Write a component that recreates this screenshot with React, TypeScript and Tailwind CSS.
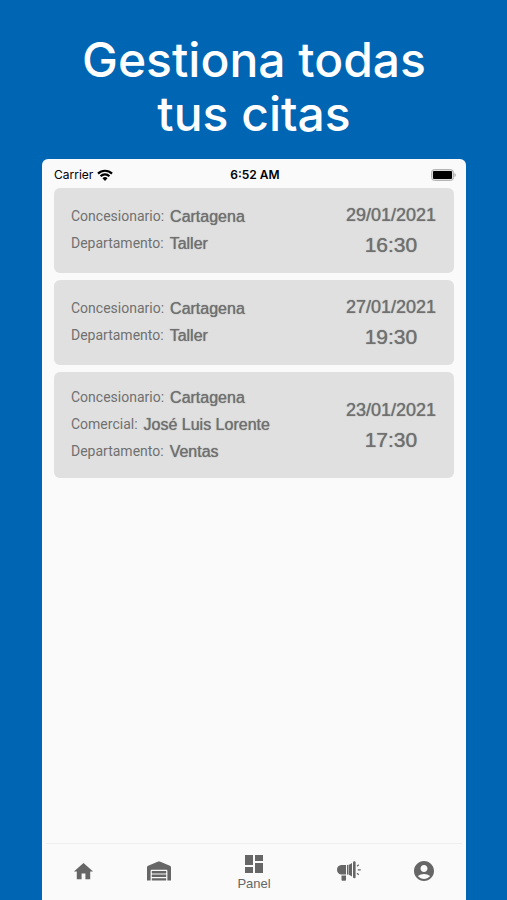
import clsx from "clsx"
import { FaWarehouse } from "react-icons/fa"
import { MdAccountCircle, MdDashboard, MdHome } from "react-icons/md"

interface Appointment {
    date: string
    time: string
    details: { label: string; value: string }[]
}

const appointments: Appointment[] = [
    {
        date: "29/01/2021",
        time: "16:30",
        details: [
            { label: "Concesionario", value: "Cartagena" },
            { label: "Departamento", value: "Taller" },
        ],
    },
    {
        date: "27/01/2021",
        time: "19:30",
        details: [
            { label: "Concesionario", value: "Cartagena" },
            { label: "Departamento", value: "Taller" },
        ],
    },
    {
        date: "23/01/2021",
        time: "17:30",
        details: [
            { label: "Concesionario", value: "Cartagena" },
            { label: "Comercial", value: "José Luis Lorente" },
            { label: "Departamento", value: "Ventas" },
        ],
    },
]

function WifiIcon() {
    return (
        <svg viewBox="0 0 16 12" className="h-3 w-4" fill="none" stroke="currentColor" strokeWidth="2.2">
            <path d="M1 4.6a10 10 0 0 1 14 0" />
            <path d="M3.6 7.3a6.2 6.2 0 0 1 8.8 0" />
            <path d="M8 12 5.5 9.3a3.6 3.6 0 0 1 5 0z" fill="currentColor" stroke="none" />
        </svg>
    )
}

function BatteryIcon() {
    return (
        <svg viewBox="0 0 25 12" className="h-3 w-[25px]">
            <rect x="0.5" y="0.5" width="22" height="11" rx="3" fill="#dcdcdc" stroke="#b4b4b4" />
            <rect x="2" y="2" width="19" height="8" rx="1" fill="#000" />
            <path d="M23.5 4v4q1.3-.6 1.3-2t-1.3-2z" fill="#a8a8a8" />
        </svg>
    )
}

function MegaphoneIcon() {
    return (
        <svg viewBox="0 0 24 20" className="h-5 w-6" fill="currentColor">
            <path d="M4 4h5v9.500H4Q0 12.500 0 8.700T4 4z" />
            <path d="M4.500 14.500H9v4.300q0 1-1 1H5.500q-1 0-1-1z" />
            <path d="M10 4l1.500-.2v9.900L10 13.500z" />
            <path d="M12 3.700 15 2v13.500l-3-1.700z" />
            <rect x="16" y="0.300" width="2.600" height="17" rx="1.200" />
            <path
                d="m20 5.300 1.800-1.600M20.800 8.800h2.900M20 12.200l1.800 1.600"
                fill="none"
                stroke="currentColor"
                strokeWidth="1.200"
            />
        </svg>
    )
}

function StatusBar() {
    return (
        <div className="grid grid-cols-3 items-center pt-2 pr-[10px] pl-3 font-['Inter',sans-serif] text-xs leading-4 text-black">
            <div className="flex items-center gap-1">
                <span>Carrier</span>
                <WifiIcon />
            </div>
            <span className="text-center font-semibold">6:52 AM</span>
            <div className="flex justify-end">
                <BatteryIcon />
            </div>
        </div>
    )
}

function AppointmentCard({ date, time, details }: Appointment) {
    return (
        <li className="flex items-center justify-between rounded-md bg-[#e0e0e0] pt-3 pr-[18px] pb-[13px] pl-[17px] text-[#707070]">
            <dl>
                {details.map(({ label, value }) => (
                    <div key={label} className="flex items-center gap-1.5 leading-[27px]">
                        <dt className="font-['Roboto',sans-serif] text-[14px]">{label}:</dt>
                        <dd className="text-[16px] [text-shadow:0_0_1px_currentColor]">{value}</dd>
                    </div>
                ))}
            </dl>
            <div className="text-center leading-[30px] [text-shadow:0_0_1px_currentColor]">
                <p className="text-[18px]">{date}</p>
                <p className="text-[21px]">{time}</p>
            </div>
        </li>
    )
}

const tabs = [
    { label: "Inicio", icon: <MdHome className="size-[23px]" /> },
    { label: "Taller", icon: <FaWarehouse className="size-6" /> },
    { label: "Panel", icon: <MdDashboard className="size-6" />, active: true },
    { label: "Noticias", icon: <MegaphoneIcon /> },
    { label: "Perfil", icon: <MdAccountCircle className="size-6" /> },
]

function TabBar() {
    return (
        <nav className="mx-1 flex h-[57px] border-t border-[#efefef] text-[#666666]">
            {tabs.map(({ label, icon, active }) => (
                <button
                    key={label}
                    type="button"
                    aria-label={label}
                    className={clsx("flex flex-col items-center", active ? "flex-[3] pt-2" : "flex-[2] justify-center pb-0.5")}
                >
                    {icon}
                    {active && <span className="text-[13px] leading-4">{label}</span>}
                </button>
            ))}
        </nav>
    )
}

export default function App() {
    return (
        <div className="flex min-h-screen flex-col bg-[#0066b3] pr-[41px] pl-[42px] font-['Liberation_Sans',Arial,sans-serif]">
            <h1 className="pt-[33px] pb-[18px] text-center font-['Inter',sans-serif] text-5xl leading-[54px] font-medium text-white">
                Gestiona todas
                <br />
                tus citas
            </h1>
            <main className="flex flex-1 flex-col rounded-t-md bg-[#fafafa]">
                <StatusBar />
                <ul className="flex flex-1 flex-col gap-[7px] px-3 pt-[5px]">
                    {appointments.map((appointment) => (
                        <AppointmentCard key={appointment.date} {...appointment} />
                    ))}
                </ul>
                <TabBar />
            </main>
        </div>
    )
}
